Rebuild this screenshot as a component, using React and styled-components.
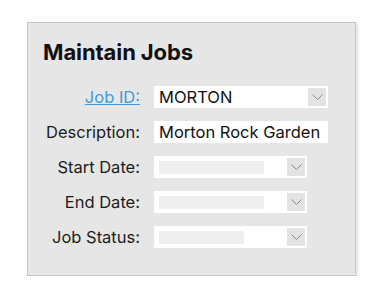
import React from 'react'
import styled, { createGlobalStyle } from 'styled-components'

const Global = createGlobalStyle`
  html, body {
    margin: 0;
    padding: 0;
    background: #ffffff;
    font-family: Inter, "Liberation Sans", sans-serif;
  }
`

function Chevron() {
  return (
    <svg width="11" height="7" viewBox="0 0 11 7">
      <path d="M0.5 0.5 L5.5 5.5 L10.5 0.5" fill="none" stroke="#8a8a8a" strokeWidth="1" />
    </svg>
  )
}

function App() {
  return (
    <Page>
      <Global />
      <Panel>
        <Title>Maintain Jobs</Title>
        <Form>
          <Label><LinkLabel href="#">Job ID:</LinkLabel></Label>
          <Field $wide>
            <FieldText>MORTON</FieldText>
            <DropButton><Chevron /></DropButton>
          </Field>

          <Label>Description:</Label>
          <Field $wide>
            <FieldText>Morton Rock Garden</FieldText>
          </Field>

          <Label>Start Date:</Label>
          <Field>
            <Placeholder $w={105} />
            <DropButton><Chevron /></DropButton>
          </Field>

          <Label>End Date:</Label>
          <Field>
            <Placeholder $w={105} />
            <DropButton><Chevron /></DropButton>
          </Field>

          <Label>Job Status:</Label>
          <Field>
            <Placeholder $w={85} />
            <DropButton><Chevron /></DropButton>
          </Field>
        </Form>
      </Panel>
    </Page>
  )
}

export default App

const Page = styled.div`
  padding: 22px 0 0 27px;
`

const Panel = styled.div`
  box-sizing: border-box;
  width: 329px;
  height: 254px;
  background: #e6e6e6;
  border: 1px solid #c6c6c6;
  box-shadow: 2px 2px 3px rgba(0, 0, 0, 0.12);
  padding: 15px 0 0 15px;
`

const Title = styled.h1`
  margin: 0;
  font-size: 22px;
  font-weight: 700;
  color: #111111;
  letter-spacing: -0.1px;
  line-height: 28px;
`

const Form = styled.div`
  display: grid;
  grid-template-columns: 97px auto;
  column-gap: 14px;
  row-gap: 13px;
  margin-top: 20px;
  align-items: center;
`

const Label = styled.div`
  text-align: right;
  font-size: 16.5px;
  color: #1c1c1c;
  line-height: 22px;
  white-space: nowrap;
`

const LinkLabel = styled.a`
  color: #3d9be0;
  text-decoration: underline;
`

const Field = styled.div`
  box-sizing: border-box;
  width: ${p => (p.$wide ? '174px' : '153px')};
  height: 22px;
  background: #ffffff;
  display: flex;
  align-items: center;
  justify-content: space-between;
  padding: 0 2px 0 5px;
`

const FieldText = styled.span`
  font-size: 16.5px;
  color: #111111;
  white-space: nowrap;
`

const Placeholder = styled.span`
  width: ${p => p.$w}px;
  height: 13px;
  background: #efefef;
`

const DropButton = styled.span`
  width: 18px;
  height: 18px;
  background: #e3e3e3;
  display: flex;
  align-items: center;
  justify-content: center;
  margin-left: auto;
`
